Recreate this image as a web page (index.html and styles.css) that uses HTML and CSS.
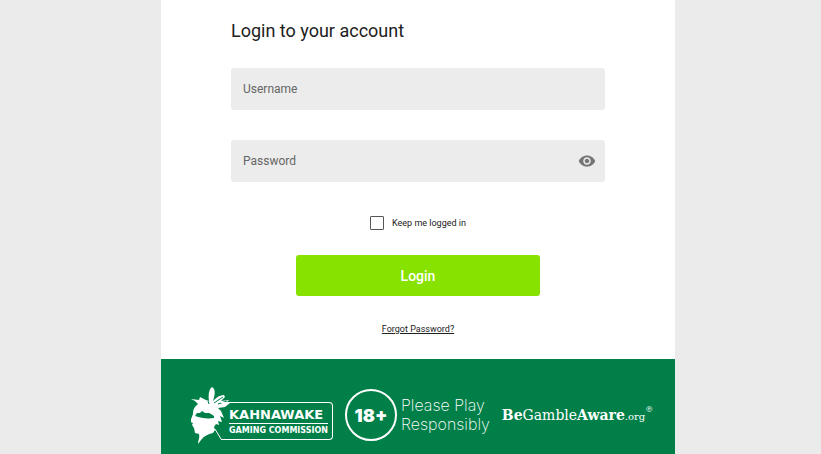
FILE: index.html
```html
<!DOCTYPE html>
<html lang="en">
<head>
    <meta charset="UTF-8">
    <meta name="viewport" content="width=device-width, initial-scale=1.0">
    <title>Login to your account</title>
    <link rel="stylesheet" href="styles.css">
</head>
<body>
    <div class="container">
        <main class="login">
            <h1>Login to your account</h1>

            <form>
                <div class="field">
                    <input type="text" id="username" name="username" placeholder=" " autocomplete="username">
                    <label for="username">Username</label>
                </div>

                <div class="field">
                    <input type="password" id="password" name="password" placeholder=" " autocomplete="current-password">
                    <label for="password">Password</label>
                    <button type="button" class="toggle" id="toggle" aria-label="Show password">
                        <svg viewBox="0 0 24 24" width="18" height="18"><path fill="#757575" d="M12 4.5C7 4.5 2.73 7.61 1 12c1.73 4.39 6 7.5 11 7.5s9.27-3.11 11-7.5c-1.73-4.39-6-7.5-11-7.5zM12 17c-2.76 0-5-2.24-5-5s2.24-5 5-5 5 2.24 5 5-2.24 5-5 5zm0-8c-1.66 0-3 1.34-3 3s1.34 3 3 3 3-1.34 3-3-1.34-3-3-3z"/></svg>
                    </button>
                </div>

                <div class="remember">
                    <input type="checkbox" id="remember" name="remember">
                    <label for="remember">Keep me logged in</label>
                </div>

                <button type="submit" class="submit">Login</button>
            </form>

            <a class="forgot" href="#">Forgot Password?</a>
        </main>

        <footer>
            <div class="kahnawake">
                <svg class="head" viewBox="0 0 40 60" width="40" height="60">
                    <path fill="#fff" d="M7 19L4 16 0 14l8 1 1-3 6 3 3 1C17 10 18 4 21 2c4 2 3 8 1 14 2-2 6-6 11-6l1 2-4 4 8-1-2 2 3 1-5 4-7 1 3 3 3 7-4-2 2 6-4-1 1 4-3-1-2 3 1 3-2 3c-5 1-9 3-12 7l-3 4c0-4 2-6 1-10l-4-1-1-5-2-3 1-2-3-1 3-8C2 25 3 22 7 19z"/>
                    <path fill="#007f49" d="M4 31l2-3h3l2-2 3 2h4l2 1 3 2v2c-7 1-13 0-19-2z"/>
                    <path fill="none" stroke="#007f49" d="M23 18l9-6M27 19l9-3M18 19l-1-3"/>
                    <path fill="none" stroke="#fff" d="M24 44l6 10"/>
                </svg>
                <div class="plate">
                    <span class="plate-name">KAHNAWAKE</span>
                    <span class="plate-sub">GAMING COMMISSION</span>
                </div>
            </div>

            <div class="play">
                <span class="age">18+</span>
                <span class="play-text">Please Play<br>Responsibly</span>
            </div>

            <div class="aware"><b>Be</b>Gamble<b>Aware</b><small>.org</small><sup>®</sup></div>
        </footer>
    </div>

    <script>
        document.getElementById('toggle').onclick = function () {
            const password = document.getElementById('password');
            password.type = password.type === 'password' ? 'text' : 'password';
        };
    </script>
</body>
</html>
```
FILE: styles.css
```css
* {
    box-sizing: border-box;
}

body {
    margin: 0;
    padding-left: 15px;
    font-family: Roboto, Arial, sans-serif;
    background-color: #ebebeb;
    color: #212121;
}

.container {
    display: flex;
    flex-direction: column;
    max-width: 514px;
    min-height: 100vh;
    margin: 0 auto;
    background-color: white;
}

.login {
    padding: 18px 70px 23px;
    text-align: center;
}

h1 {
    margin: 0 0 24px;
    font-size: 18px;
    font-weight: 400;
    line-height: 26px;
    text-align: left;
}

.field {
    display: grid;
    grid-template-columns: 1fr 36px;
    align-items: center;
    margin-bottom: 30px;
    font-size: 12px;
}

.field input {
    grid-area: 1 / 1 / 2 / 3;
    width: 100%;
    height: 42px;
    padding: 0 36px 0 12px;
    border: none;
    border-radius: 3px;
    background-color: #ececec;
    font: inherit;
}

.field label {
    grid-area: 1 / 1;
    padding-left: 12px;
    color: #666;
    text-align: left;
    pointer-events: none;
}

.field input:not(:placeholder-shown) + label {
    visibility: hidden;
}

.toggle {
    grid-area: 1 / 2;
    display: flex;
    justify-content: center;
    padding: 0;
    border: none;
    background: none;
    cursor: pointer;
}

.remember {
    display: flex;
    justify-content: center;
    align-items: center;
    gap: 8px;
    margin: 34px 0 25px;
    font-size: 9px;
}

.remember input {
    appearance: none;
    width: 14px;
    height: 14px;
    margin: 0;
    border: 1px solid #555;
    border-radius: 1px;
}

.remember input:checked {
    background-color: #88e200;
}

.submit {
    width: 65%;
    height: 41px;
    border: none;
    border-radius: 3px;
    background-color: #88e200;
    color: white;
    font-family: inherit;
    font-size: 14px;
    font-weight: 500;
    cursor: pointer;
}

.forgot {
    display: block;
    width: fit-content;
    margin: 26px auto 0;
    color: #212121;
    font-size: 9px;
    line-height: 14px;
}

footer {
    flex: 1;
    display: flex;
    align-items: flex-start;
    gap: 12px;
    padding: 26px 30px 8px;
    background-color: #007f49;
    color: white;
}

.kahnawake {
    display: flex;
    align-items: flex-end;
}

.head {
    flex: none;
}

.plate {
    display: flex;
    flex-direction: column;
    margin: 0 0 5px -10px;
    padding: 3px 4px 1px 8px;
    border: 1px solid white;
    border-left: none;
    border-radius: 0 4px 4px 0;
    font-family: "DejaVu Sans", sans-serif;
    font-weight: 700;
    white-space: nowrap;
}

.plate-name {
    border-bottom: 1px solid white;
    font-size: 13px;
    line-height: 17px;
}

.plate-sub {
    font-size: 8px;
    line-height: 14px;
}

.play {
    display: flex;
    align-items: center;
    gap: 4px;
    padding-top: 4px;
}

.age {
    display: flex;
    justify-content: center;
    align-items: center;
    width: 52px;
    height: 52px;
    border: 2px solid white;
    border-radius: 50%;
    font-family: Inter, sans-serif;
    font-size: 18px;
    font-weight: 900;
}

.play-text {
    font-family: Inter, sans-serif;
    font-size: 16px;
    font-weight: 200;
    line-height: 19px;
}

.aware {
    padding-top: 18px;
    font-family: "DejaVu Serif", serif;
    font-size: 14px;
    line-height: 24px;
    white-space: nowrap;
}

.aware small {
    font-size: 10px;
}

.aware sup {
    font-size: 8px;
    line-height: 0;
    vertical-align: 8px;
}
```
